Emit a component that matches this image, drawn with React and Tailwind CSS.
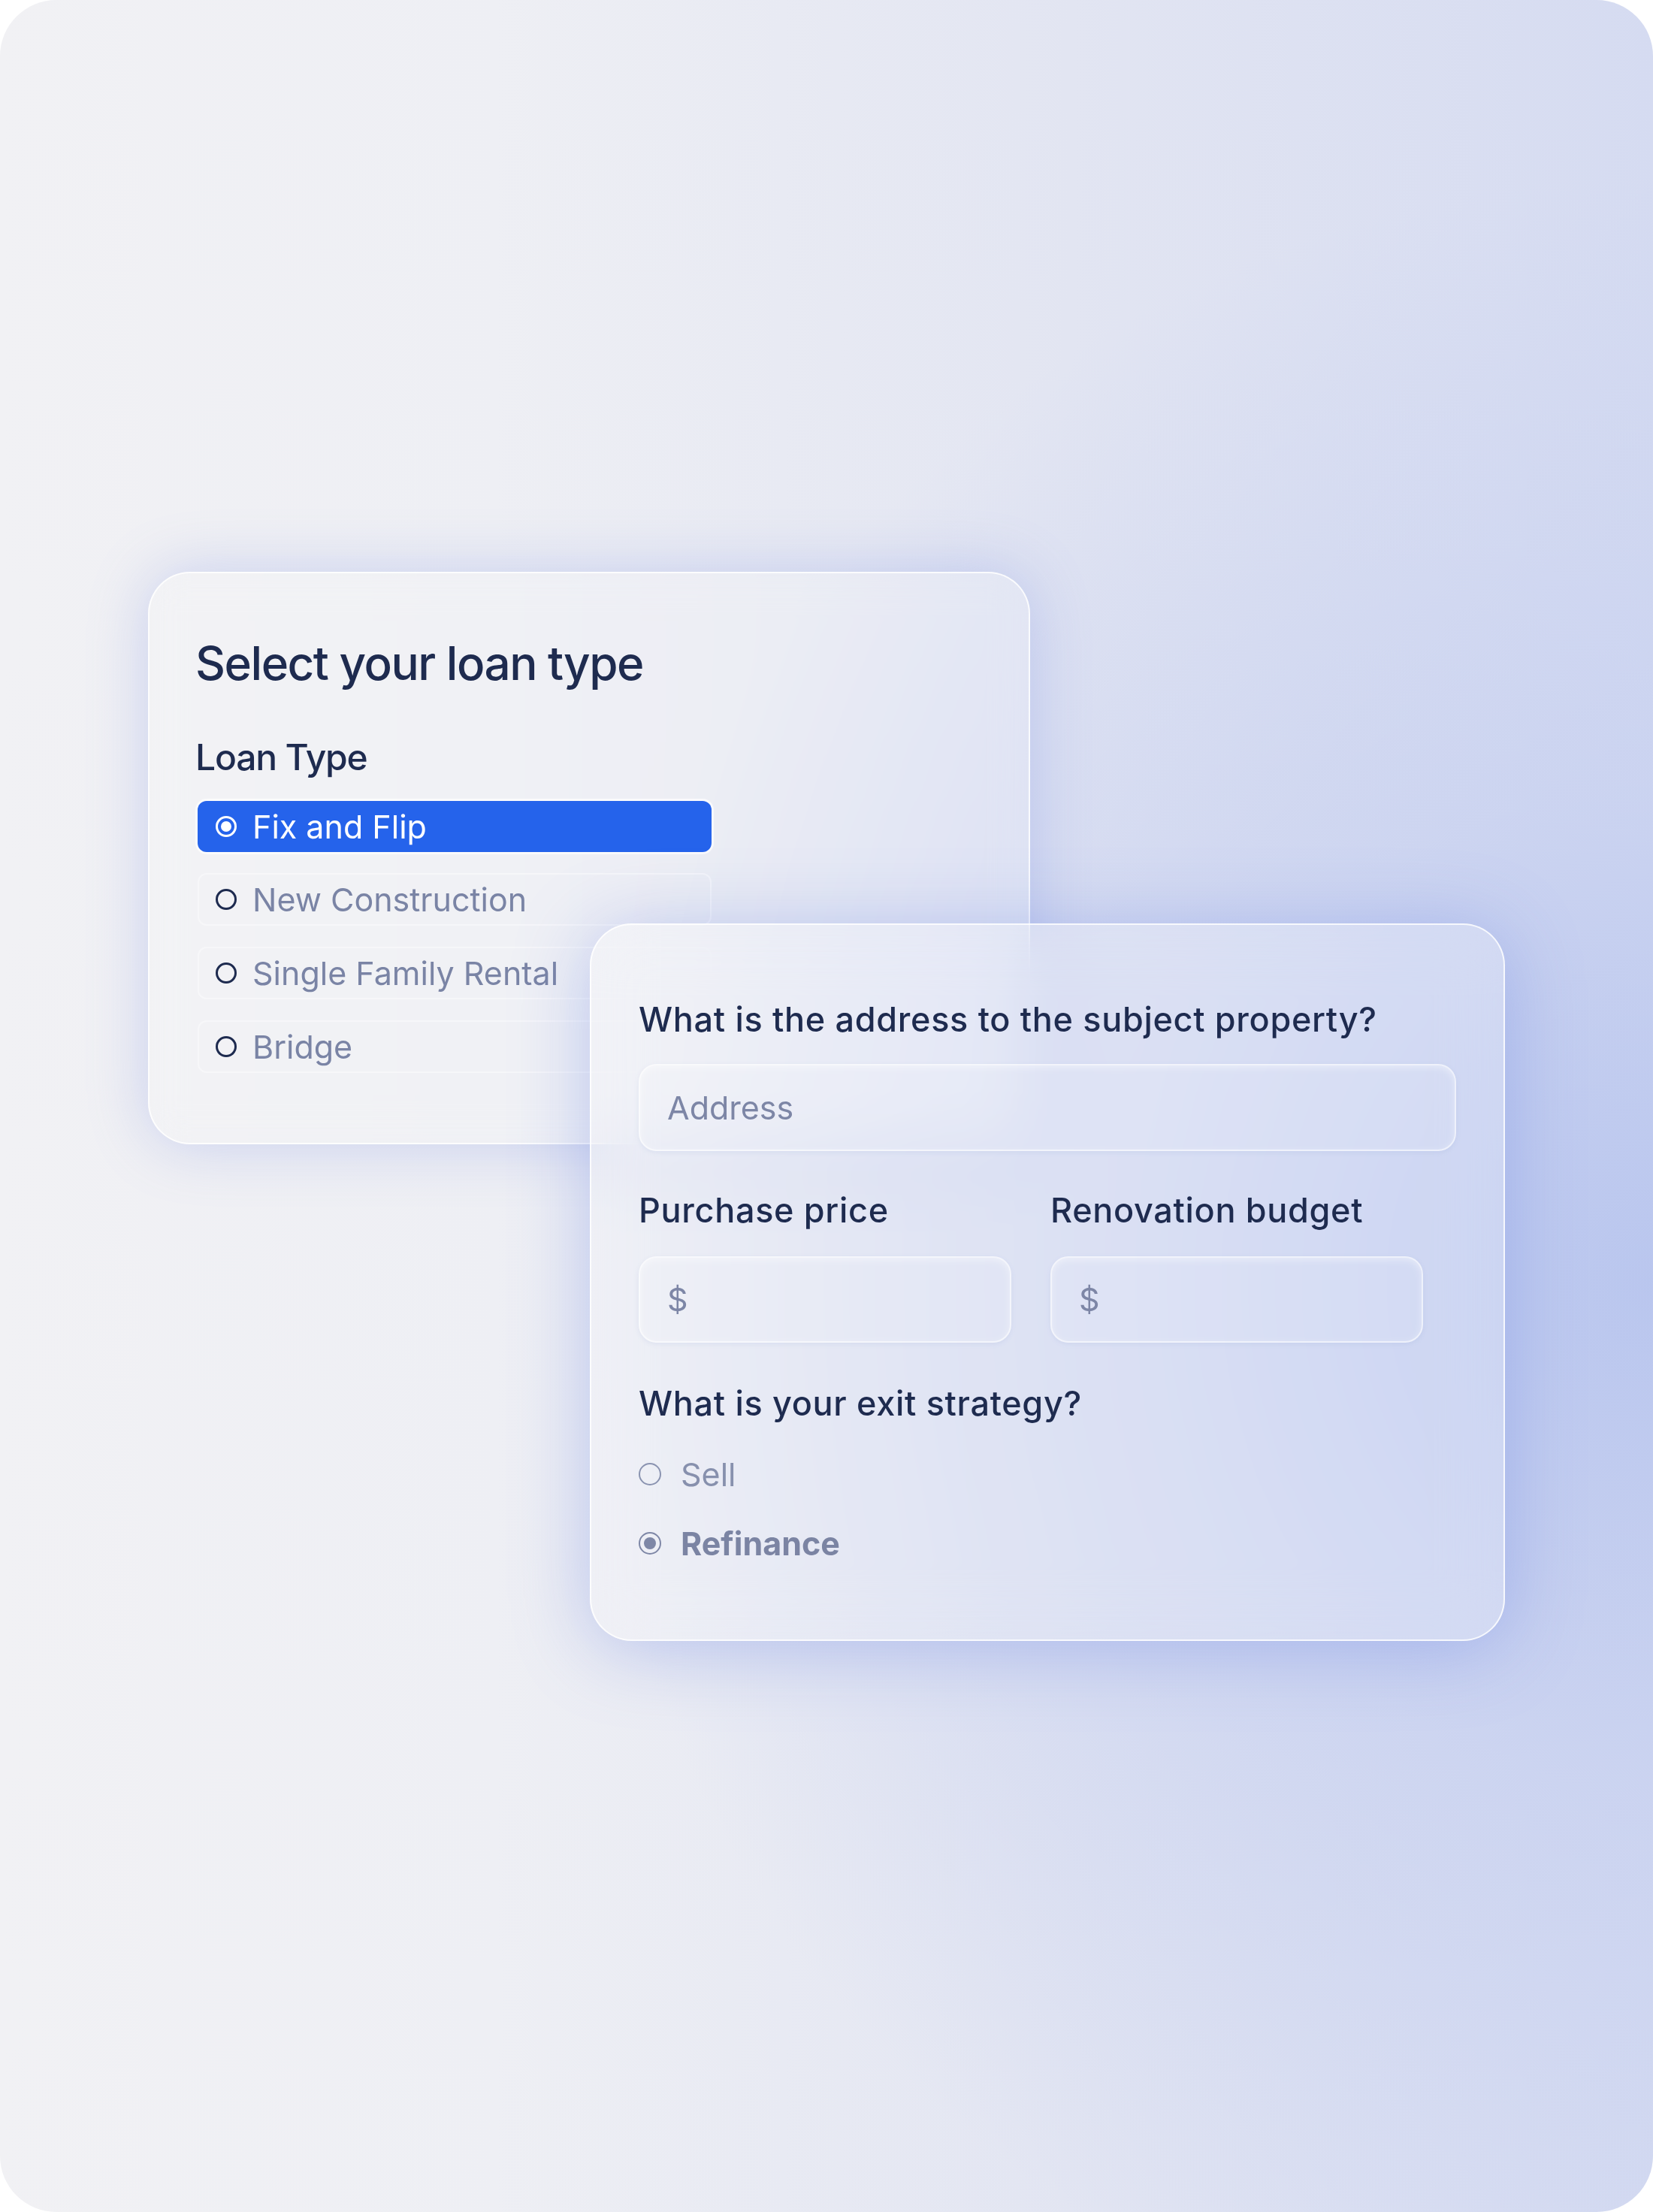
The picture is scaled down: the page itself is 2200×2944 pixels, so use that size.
import React from "react";

const loanTypes = ["Fix and Flip", "New Construction", "Single Family Rental", "Bridge"];

function LoanOption({ label, selected }) {
  if (selected) {
    return (
      <div className="flex h-[68px] w-[684px] items-center rounded-[12px] bg-[#2563eb] pl-[24px] shadow-[0_0_0_3px_rgba(255,255,255,0.65)]">
        <span className="flex h-[28px] w-[28px] items-center justify-center rounded-full border-[3px] border-white">
          <span className="h-[14px] w-[14px] rounded-full bg-white" />
        </span>
        <span className="ml-[21px] text-[43px] leading-none text-white">{label}</span>
      </div>
    );
  }
  return (
    <div className="flex h-[70px] w-[684px] items-center rounded-[12px] border-2 border-white/40 pl-[22px]">
      <span className="h-[28px] w-[28px] rounded-full border-[3px] border-[#1e2b4f]" />
      <span className="ml-[21px] text-[43px] leading-none text-[#7a84a5]">{label}</span>
    </div>
  );
}

function MoneyInput({ placeholder }) {
  return (
    <div className="flex items-center rounded-[24px] border-2 border-white/60 bg-white/10 pl-[36px] shadow-[inset_0_3px_8px_rgba(255,255,255,0.4),0_2px_6px_rgba(110,130,200,0.12)]">
      <span className="text-[43px] leading-none text-[#7d86a6]">{placeholder}</span>
    </div>
  );
}

export default function App() {
  return (
    <div className="min-h-screen bg-white font-[Inter,sans-serif]">
      <div className="h-[2944px] w-[2200px] overflow-hidden rounded-[75px] bg-[radial-gradient(ellipse_65%_50%_at_100%_58%,rgba(184,197,238,0.95)_0%,rgba(196,206,240,0.6)_45%,rgba(220,225,243,0)_100%),linear-gradient(90deg,#f1f1f4_0%,#eeeff4_30%,#e2e5f2_65%,#d5dbf1_100%)] pl-[197px] pt-[761px]">
        {/* loan type card */}
        <div className="h-[762px] w-[1174px] rounded-[56px] border-2 border-white/80 bg-white/15 pl-[61px] pt-[89px] shadow-[0_0_80px_rgba(105,130,225,0.3)] backdrop-blur-xl">
          <h1 className="text-[62px] font-medium leading-none tracking-[-0.024em] text-[#1e2b4f]">
            Select your loan type
          </h1>
          <div className="mt-[70px] text-[48px] font-medium leading-none tracking-[-0.025em] text-[#1e2b4f]">
            Loan Type
          </div>
          <div className="ml-[3px] mt-[34px] flex flex-col gap-[28px]">
            {loanTypes.map((t, i) => (
              <LoanOption key={t} label={t} selected={i === 0} />
            ))}
          </div>
        </div>

        {/* property details card */}
        <div className="relative z-10 -mt-[294px] ml-[588px] h-[955px] w-[1218px] rounded-[56px] border-2 border-white/80 bg-white/20 pl-[63px] pt-[103px] shadow-[0_10px_100px_rgba(100,125,225,0.38)] backdrop-blur-2xl">
          <div className="text-[45px] font-medium leading-none tracking-[0.015em] text-[#1e2b4f]">
            What is the address to the subject property?
          </div>
          <div className="mt-[37px] flex h-[116px] w-[1088px] items-center rounded-[24px] border-2 border-white/60 bg-white/10 pl-[36px] shadow-[inset_0_3px_8px_rgba(255,255,255,0.4),0_2px_6px_rgba(110,130,200,0.12)]">
            <span className="text-[43px] leading-none text-[#7d86a6]">Address</span>
          </div>

          <div className="mt-[56px] grid w-[1044px] grid-cols-2 gap-x-[52px]">
            <div className="text-[45px] font-medium leading-none tracking-[0.015em] text-[#1e2b4f]">
              Purchase price
            </div>
            <div className="text-[45px] font-medium leading-none tracking-[0.015em] text-[#1e2b4f]">
              Renovation budget
            </div>
            <div className="mt-[39px] grid h-[115px]">
              <MoneyInput placeholder="$" />
            </div>
            <div className="mt-[39px] grid h-[115px]">
              <MoneyInput placeholder="$" />
            </div>
          </div>

          <div className="mt-[58px] text-[45px] font-medium leading-none tracking-[0.015em] text-[#1e2b4f]">
            What is your exit strategy?
          </div>
          <div className="mt-[50px] flex h-[44px] items-center">
            <span className="h-[30px] w-[30px] rounded-full border-[2.5px] border-[#8a93b0]" />
            <span className="ml-[26px] text-[43px] leading-none text-[#8790ad]">Sell</span>
          </div>
          <div className="mt-[48px] flex h-[44px] items-center">
            <span className="flex h-[30px] w-[30px] items-center justify-center rounded-full border-[2.5px] border-[#7e87a6]">
              <span className="h-[16px] w-[16px] rounded-full bg-[#7e87a6]" />
            </span>
            <span className="ml-[26px] text-[43px] font-bold leading-none text-[#7b84a3]">Refinance</span>
          </div>
        </div>
      </div>
    </div>
  );
}
